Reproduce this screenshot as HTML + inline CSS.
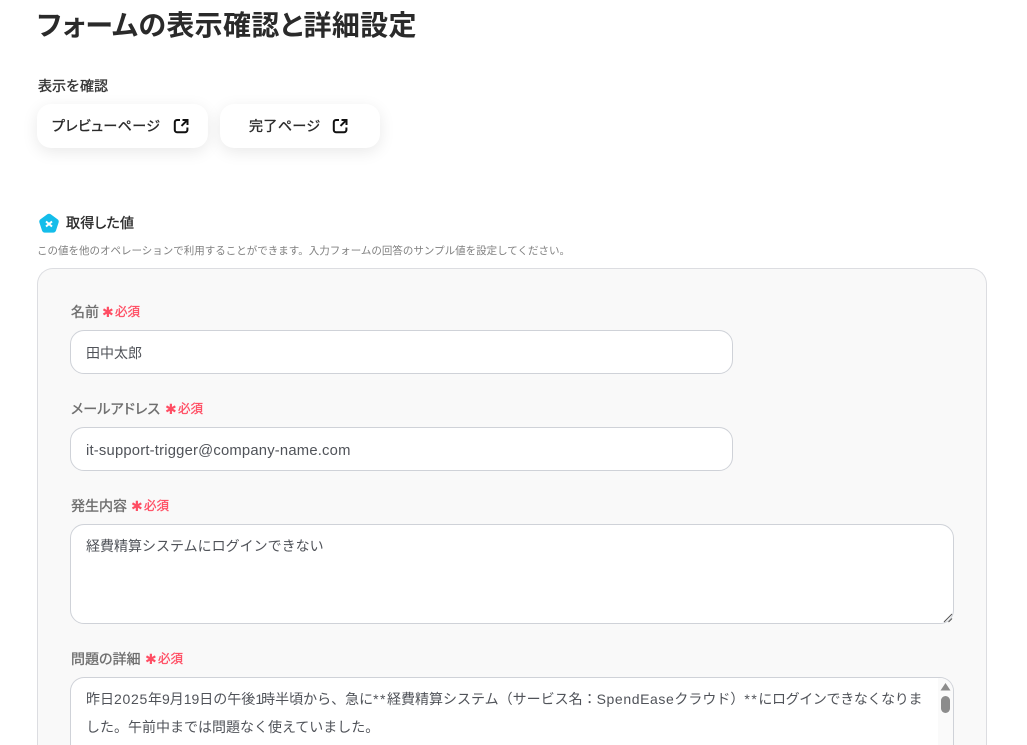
<!DOCTYPE html>
<html lang="ja">
<head>
<meta charset="utf-8">
<title>フォームの表示確認と詳細設定</title>
<style>
html,body{margin:0;padding:0;background:#fff;width:1027px;height:745px;overflow:hidden;}
#p{position:relative;width:1027px;height:745px;overflow:hidden;font-family:"Liberation Sans","Noto Sans CJK JP",sans-serif;color:#2b2b2b;}
.a{position:absolute;white-space:nowrap;}
.palt{font-feature-settings:"palt" 1;}
.m{font-weight:400;-webkit-text-stroke:.35px currentColor;}
.btn{position:absolute;top:104px;height:44px;background:#fff;border-radius:14px;box-shadow:0 4px 16px rgba(0,0,0,.09);}
.lbl{position:absolute;left:71px;font-size:14px;line-height:20px;font-weight:400;-webkit-text-stroke:.35px currentColor;color:#6f6f6f;white-space:nowrap;font-feature-settings:"palt" 1;}
.star{position:absolute;font-size:14px;line-height:20px;font-weight:400;color:#ff4d63;font-family:"DejaVu Sans",sans-serif;white-space:nowrap;}
.req{position:absolute;font-size:12.5px;line-height:20px;font-weight:400;-webkit-text-stroke:.3px currentColor;color:#ff4d63;white-space:nowrap;}
.inp{position:absolute;left:70px;background:#fff;border:1px solid #cfd2d8;border-radius:14px;box-sizing:border-box;}
.t{position:absolute;left:86px;font-size:14px;line-height:20px;color:#505359;white-space:nowrap;}
</style>
</head>
<body>
<div id="p">
<div class="a palt" style="left:37px;top:7px;font-size:28px;line-height:38px;font-weight:700;color:#2a2a2a;letter-spacing:.36px;">フォームの表示確認と詳細設定</div>
<div class="a m" style="left:38px;top:76px;font-size:14px;line-height:20px;color:#333;">表示を確認</div>

<div class="btn" style="left:37px;width:171px;"></div>
<div class="a palt m" style="left:52px;top:116px;font-size:14px;line-height:20px;color:#2b2b2b;letter-spacing:.4px;">プレビューページ</div>
<svg class="a" style="left:172px;top:117px;" width="18" height="18" viewBox="0 0 18 18" fill="none" stroke="#111" stroke-width="2"><path d="M8 3H5a2.200 2.200 0 0 0-2.200 2.200v8A2.200 2.200 0 0 0 5 15.200h8.200a2.200 2.200 0 0 0 2.200-2.200V10.500"/><path d="M10.500 3h5v5M15.200 3.200 9.500 8.900"/></svg>

<div class="btn" style="left:220px;width:160px;"></div>
<div class="a palt m" style="left:249px;top:116px;font-size:14px;line-height:20px;color:#2b2b2b;letter-spacing:.4px;">完了ページ</div>
<svg class="a" style="left:331px;top:117px;" width="18" height="18" viewBox="0 0 18 18" fill="none" stroke="#111" stroke-width="2"><path d="M8 3H5a2.200 2.200 0 0 0-2.200 2.200v8A2.200 2.200 0 0 0 5 15.200h8.200a2.200 2.200 0 0 0 2.200-2.200V10.500"/><path d="M10.500 3h5v5M15.200 3.200 9.500 8.900"/></svg>

<svg class="a" style="left:38px;top:213px;" width="22" height="21" viewBox="0 0 22 21"><path d="M9.300 1.300a3 3 0 0 1 3.400 0l6.800 4.900a3 3 0 0 1 1.100 3.300l-2.600 8a3 3 0 0 1-2.800 2.100H6.800A3 3 0 0 1 4 17.500l-2.600-8a3 3 0 0 1 1.100-3.300z" fill="#14bdea"/><path d="M8 8.500l6 5M14 8.500l-6 5" stroke="#fff" stroke-width="2" fill="none"/></svg>
<div class="a palt m" style="left:66px;top:213px;font-size:14px;line-height:20px;color:#2b2b2b;letter-spacing:.2px;">取得した値</div>
<div class="a" style="left:37px;top:243px;font-size:10.500px;line-height:16px;color:#808080;">この値を他のオペレーションで利用することができます。入力フォームの回答のサンプル値を設定してください。</div>

<div class="a" style="left:37px;top:268px;width:950px;height:477px;box-sizing:border-box;background:#f9f9f9;border:1px solid #dcdde1;border-bottom:0;border-radius:16px 16px 0 0;"></div>

<div class="lbl" style="top:302px;">名前</div>
<span class="star" style="left:102px;top:303px;">✱</span><span class="req" style="left:115px;top:302px;">必須</span>
<div class="inp" style="top:330px;width:663px;height:44px;"></div>
<div class="t" style="top:343px;">田中太郎</div>

<div class="lbl" style="top:399px;letter-spacing:.15px;">メールアドレス</div>
<span class="star" style="left:165px;top:400px;">✱</span><span class="req" style="left:178px;top:399px;">必須</span>
<div class="inp" style="top:427px;width:663px;height:44px;"></div>
<div class="t" style="top:441px;font-size:14.800px;letter-spacing:.2px;">it-support-trigger@company-name.com</div>

<div class="lbl" style="top:496px;">発生内容</div>
<span class="star" style="left:131px;top:497px;">✱</span><span class="req" style="left:144px;top:496px;">必須</span>
<div class="inp" style="top:524px;width:884px;height:100px;"></div>
<div class="t" style="top:536px;">経費精算システムにログインできない</div>
<svg class="a" style="left:943px;top:613px;" width="10" height="10" viewBox="0 0 10 10" stroke="#555" stroke-width="1" fill="none"><path d="M1 9 9 1M5.500 9 9 5.500"/></svg>

<div class="lbl" style="top:649px;">問題の詳細</div>
<span class="star" style="left:145px;top:650px;">✱</span><span class="req" style="left:158px;top:649px;">必須</span>
<div class="inp" style="top:677px;width:884px;height:68px;border-bottom:0;border-radius:14px 14px 0 0;"></div>
<div class="t" style="top:689px;">昨日<span style="letter-spacing:.7px">2025</span>年9月19日の午後<span style="letter-spacing:-2px">1</span>時半頃から、急に<span style="letter-spacing:1.5px">**</span>経費精算システム（サービス名：<span style="letter-spacing:.6px">SpendEase</span>クラウド）<span style="letter-spacing:1.5px">**</span><span style="letter-spacing:-.35px">にログインできなくなりま</span></div>
<div class="t" style="top:717px;">した。午前中までは問題なく使えていました。</div>
<div class="a" style="left:938px;top:678px;width:15px;height:67px;background:#fafafa;border-top-right-radius:13px;"></div>
<svg class="a" style="left:938px;top:681px;" width="15" height="34" viewBox="0 0 15 34"><path d="M7.500 2 12.500 9.500H2.500z" fill="#8c8c8c"/><rect x="3" y="15" width="9" height="17" rx="4.500" fill="#8c8c8c"/></svg>
</div>
</body>
</html>
